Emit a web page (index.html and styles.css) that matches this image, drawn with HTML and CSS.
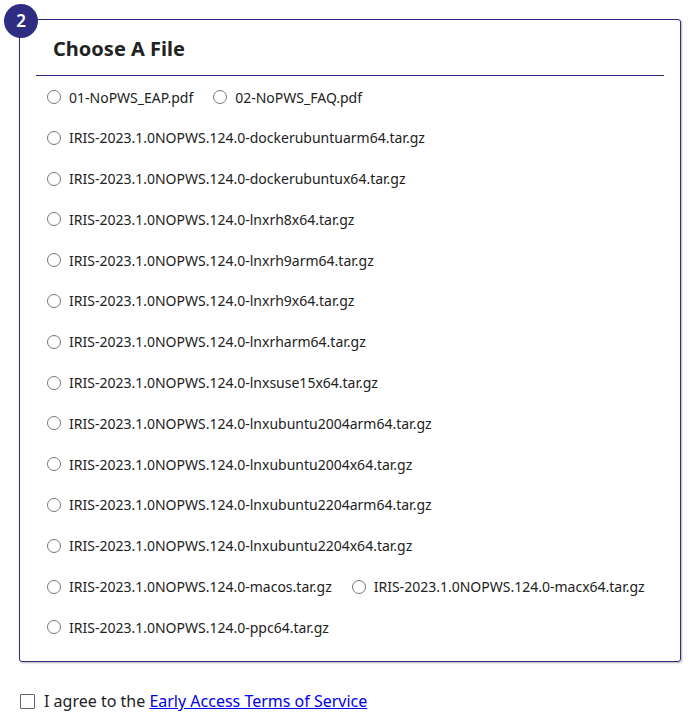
FILE: index.html
```html
<!DOCTYPE html>
<html lang="en-us">
<head>
<meta charset="utf-8">
<title>Choose A File</title>
<link rel="stylesheet" href="styles.css">
</head>
<body>
    <div class="page">
        <div class="stepBox">
            <span class="stepBadge">2</span>
            <h2 class="stepTitle">Choose A File</h2>
            <div class="fileList">
                <label class="fileItem"><input type="radio" name="file"> 01-NoPWS_EAP.pdf</label>
                <label class="fileItem"><input type="radio" name="file"> 02-NoPWS_FAQ.pdf</label>
                <label class="fileItem"><input type="radio" name="file"> IRIS-2023.1.0NOPWS.124.0-dockerubuntuarm64.tar.gz</label>
                <label class="fileItem"><input type="radio" name="file"> IRIS-2023.1.0NOPWS.124.0-dockerubuntux64.tar.gz</label>
                <label class="fileItem"><input type="radio" name="file"> IRIS-2023.1.0NOPWS.124.0-lnxrh8x64.tar.gz</label>
                <label class="fileItem"><input type="radio" name="file"> IRIS-2023.1.0NOPWS.124.0-lnxrh9arm64.tar.gz</label>
                <label class="fileItem"><input type="radio" name="file"> IRIS-2023.1.0NOPWS.124.0-lnxrh9x64.tar.gz</label>
                <label class="fileItem"><input type="radio" name="file"> IRIS-2023.1.0NOPWS.124.0-lnxrharm64.tar.gz</label>
                <label class="fileItem"><input type="radio" name="file"> IRIS-2023.1.0NOPWS.124.0-lnxsuse15x64.tar.gz</label>
                <label class="fileItem"><input type="radio" name="file"> IRIS-2023.1.0NOPWS.124.0-lnxubuntu2004arm64.tar.gz</label>
                <label class="fileItem"><input type="radio" name="file"> IRIS-2023.1.0NOPWS.124.0-lnxubuntu2004x64.tar.gz</label>
                <label class="fileItem"><input type="radio" name="file"> IRIS-2023.1.0NOPWS.124.0-lnxubuntu2204arm64.tar.gz</label>
                <label class="fileItem"><input type="radio" name="file"> IRIS-2023.1.0NOPWS.124.0-lnxubuntu2204x64.tar.gz</label>
                <label class="fileItem"><input type="radio" name="file"> IRIS-2023.1.0NOPWS.124.0-macos.tar.gz</label>
                <label class="fileItem"><input type="radio" name="file"> IRIS-2023.1.0NOPWS.124.0-macx64.tar.gz</label>
                <label class="fileItem"><input type="radio" name="file"> IRIS-2023.1.0NOPWS.124.0-ppc64.tar.gz</label>
            </div>
        </div>
        <label class="agree"><input type="checkbox"> I agree to the&nbsp;<a href="#">Early Access Terms of Service</a></label>
    </div>
</body>
</html>
```
FILE: styles.css
```css
body {
	margin: 0;
	font-family: "Noto Sans", sans-serif;
	color: #222;
	background-color: #fff;
}
.page {
	padding: 19px 15px 0 19px;
}
.stepBox {
	position: relative;
	width: 628px;
	border: 1px solid #2e2d82;
	border-radius: 3px;
	padding: 15px 16px 24px 16px;
	box-shadow: 1px 1px 2px rgba(0, 0, 0, 0.3);
}
.stepBadge {
	position: absolute;
	left: -16px;
	top: -16px;
	width: 34px;
	height: 34px;
	border-radius: 50%;
	background-color: #2e2d82;
	color: #fff;
	font-size: 17px;
	font-weight: 600;
	line-height: 34px;
	text-align: center;
}
.stepTitle {
	margin: 0;
	padding: 0 0 12px 17px;
	font-size: 20px;
	font-weight: bold;
	line-height: 28px;
	color: #222;
	border-bottom: 1px solid #2e2d82;
}
.fileList {
	display: flex;
	flex-wrap: wrap;
	column-gap: 20px;
	row-gap: 20.8px;
	padding: 11px 0 0 11px;
}
.fileItem {
	display: flex;
	align-items: center;
	height: 20px;
	font-size: 14px;
	color: #222;
	white-space: nowrap;
}
.fileItem:nth-child(n+3) {
	flex-basis: 100%;
}
.fileItem:nth-child(14),
.fileItem:nth-child(15) {
	flex-basis: auto;
}
.fileItem input {
	appearance: none;
	box-sizing: border-box;
	width: 14px;
	height: 14px;
	margin: 0 8px 0 0;
	border: 1px solid #777;
	border-radius: 50%;
	background-color: #fff;
}
.agree {
	display: flex;
	align-items: center;
	margin-top: 28px;
	font-size: 16px;
	color: #222;
}
.agree input {
	appearance: none;
	box-sizing: border-box;
	width: 15px;
	height: 15px;
	margin: 0 9px 0 1px;
	border: 1.5px solid #666;
	border-radius: 1px;
	background-color: #fff;
}
.agree a {
	color: #0000ee;
}
```
